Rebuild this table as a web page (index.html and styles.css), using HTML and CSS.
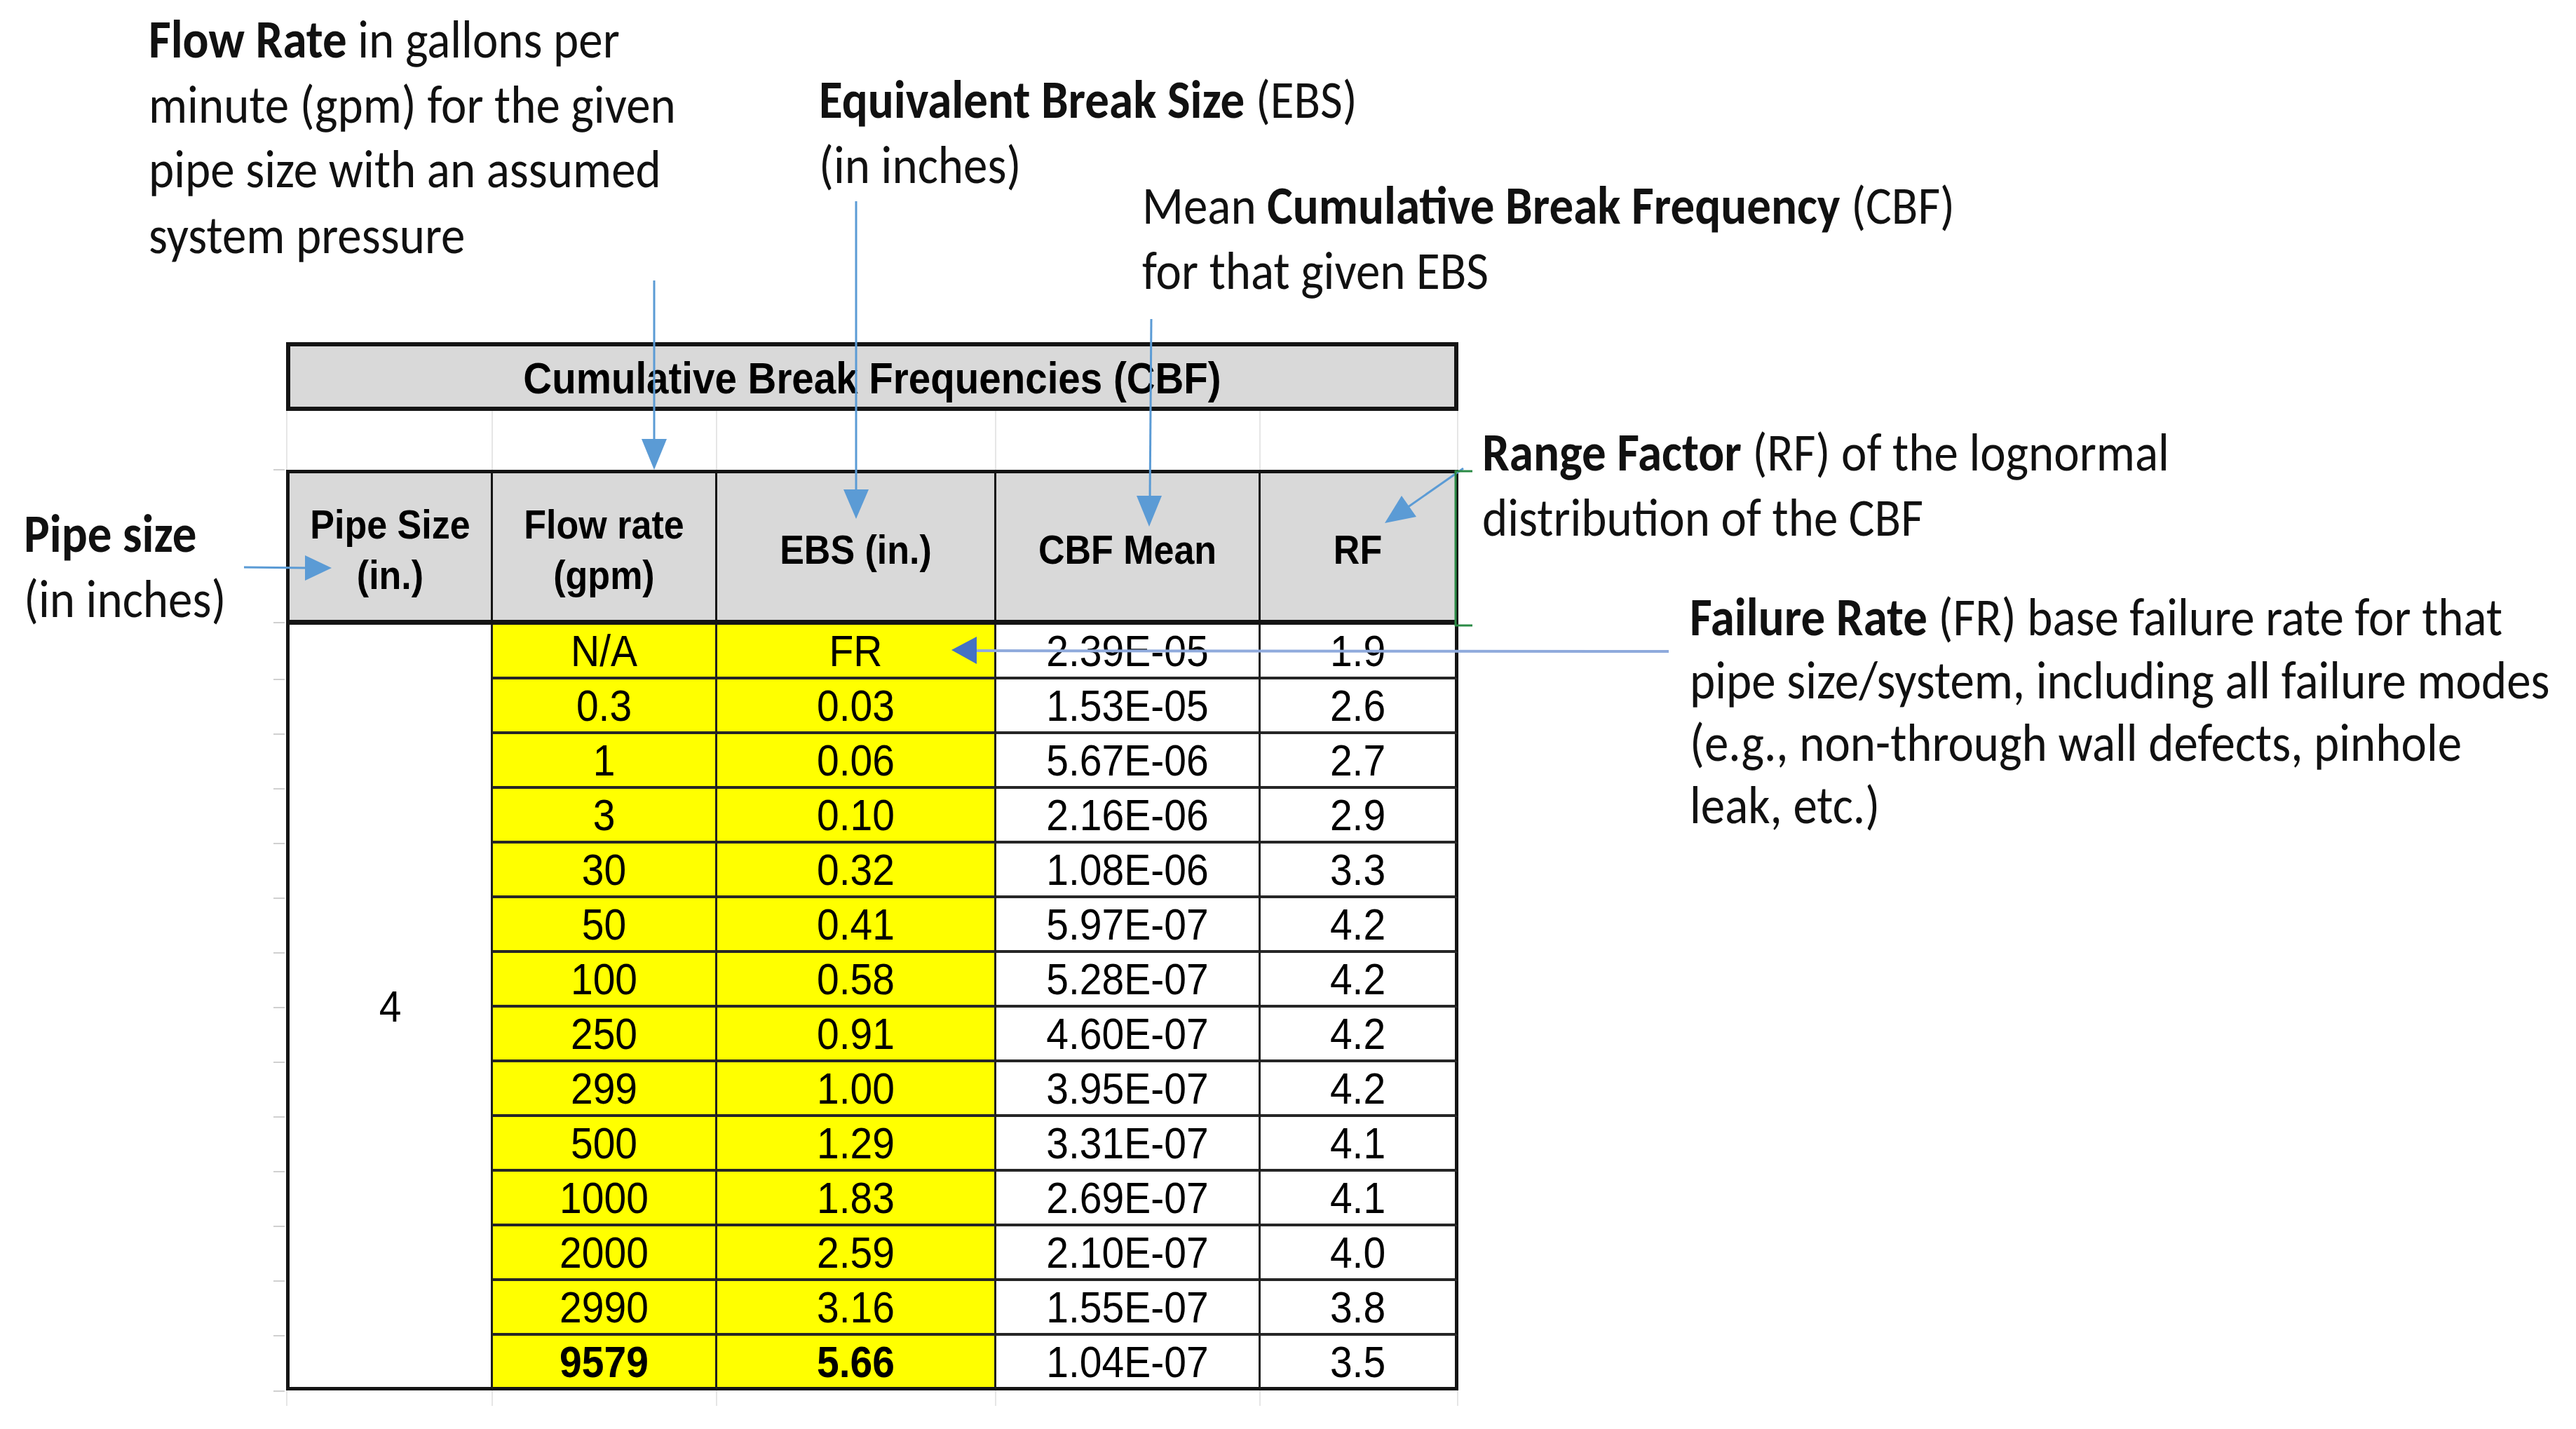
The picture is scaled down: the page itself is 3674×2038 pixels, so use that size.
FILE: index.html
```html
<!DOCTYPE html>
<html lang="en">
<head>
<meta charset="utf-8">
<title>Cumulative Break Frequencies (CBF)</title>
<link rel="stylesheet" href="styles.css">
</head>
<body>
<div class="canvas">
  <div class="title"><span>Cumulative Break Frequencies (CBF)</span></div>
  <div class="gridrow spacer"><span></span><span></span><span></span><span></span><span></span></div>
  <div class="cbf">
    <div class="h"><span>Pipe Size<br>(in.)</span></div>
    <div class="h"><span>Flow rate<br>(gpm)</span></div>
    <div class="h"><span>EBS (in.)</span></div>
    <div class="h"><span>CBF Mean</span></div>
    <div class="h h-last"><span>RF</span></div>

    <div class="c pipe"><span>4</span></div>
    <div class="c y"><span>N/A</span></div><div class="c y"><span>FR</span></div><div class="c"><span>2.39E-05</span></div><div class="c rf"><span>1.9</span></div>
    <div class="c y"><span>0.3</span></div><div class="c y"><span>0.03</span></div><div class="c"><span>1.53E-05</span></div><div class="c rf"><span>2.6</span></div>
    <div class="c y"><span>1</span></div><div class="c y"><span>0.06</span></div><div class="c"><span>5.67E-06</span></div><div class="c rf"><span>2.7</span></div>
    <div class="c y"><span>3</span></div><div class="c y"><span>0.10</span></div><div class="c"><span>2.16E-06</span></div><div class="c rf"><span>2.9</span></div>
    <div class="c y"><span>30</span></div><div class="c y"><span>0.32</span></div><div class="c"><span>1.08E-06</span></div><div class="c rf"><span>3.3</span></div>
    <div class="c y"><span>50</span></div><div class="c y"><span>0.41</span></div><div class="c"><span>5.97E-07</span></div><div class="c rf"><span>4.2</span></div>
    <div class="c y"><span>100</span></div><div class="c y"><span>0.58</span></div><div class="c"><span>5.28E-07</span></div><div class="c rf"><span>4.2</span></div>
    <div class="c y"><span>250</span></div><div class="c y"><span>0.91</span></div><div class="c"><span>4.60E-07</span></div><div class="c rf"><span>4.2</span></div>
    <div class="c y"><span>299</span></div><div class="c y"><span>1.00</span></div><div class="c"><span>3.95E-07</span></div><div class="c rf"><span>4.2</span></div>
    <div class="c y"><span>500</span></div><div class="c y"><span>1.29</span></div><div class="c"><span>3.31E-07</span></div><div class="c rf"><span>4.1</span></div>
    <div class="c y"><span>1000</span></div><div class="c y"><span>1.83</span></div><div class="c"><span>2.69E-07</span></div><div class="c rf"><span>4.1</span></div>
    <div class="c y"><span>2000</span></div><div class="c y"><span>2.59</span></div><div class="c"><span>2.10E-07</span></div><div class="c rf"><span>4.0</span></div>
    <div class="c y"><span>2990</span></div><div class="c y"><span>3.16</span></div><div class="c"><span>1.55E-07</span></div><div class="c rf"><span>3.8</span></div>
    <div class="c y last b"><span>9579</span></div><div class="c y last b"><span>5.66</span></div><div class="c last"><span>1.04E-07</span></div><div class="c rf last"><span>3.5</span></div>
  </div>
  <div class="gridrow below"><span></span><span></span><span></span><span></span><span></span></div>

  <p class="note note-flow"><b>Flow Rate</b> in gallons per<br>minute (gpm) for the given<br>pipe size with an assumed<br>system pressure</p>
  <p class="note note-ebs"><b>Equivalent Break Size</b> (EBS)<br>(in inches)</p>
  <p class="note note-cbf">Mean <b>Cumulative Break Frequency</b> (CBF)<br>for that given EBS</p>
  <p class="note note-rf"><b>Range Factor</b> (RF) of the lognormal<br>distribution of the CBF</p>
  <p class="note note-pipe"><b>Pipe size</b><br>(in inches)</p>
  <p class="note note-fr"><b>Failure Rate</b> (FR) base failure rate for that<br>pipe size/system, including all failure modes<br>(e.g., non-through wall defects, pinhole<br>leak, etc.)</p>

  <svg class="overlay" width="3674" height="2038" viewBox="0 0 3674 2038" aria-hidden="true">
    <g stroke="#d0d0d0" stroke-width="2">
      <line x1="390" y1="969" x2="406" y2="969"/><line x1="390" y1="1047" x2="406" y2="1047"/>
      <line x1="390" y1="1125" x2="406" y2="1125"/><line x1="390" y1="1203" x2="406" y2="1203"/>
      <line x1="390" y1="1281" x2="406" y2="1281"/><line x1="390" y1="1359" x2="406" y2="1359"/>
      <line x1="390" y1="1437" x2="406" y2="1437"/><line x1="390" y1="1515" x2="406" y2="1515"/>
      <line x1="390" y1="1593" x2="406" y2="1593"/><line x1="390" y1="1671" x2="406" y2="1671"/>
      <line x1="390" y1="1749" x2="406" y2="1749"/><line x1="390" y1="1827" x2="406" y2="1827"/>
      <line x1="390" y1="1905" x2="406" y2="1905"/><line x1="390" y1="1984" x2="406" y2="1984"/>
      <line x1="390" y1="670" x2="406" y2="670"/><line x1="390" y1="888" x2="406" y2="888"/>
    </g>
    <g stroke="#5b9bd5" stroke-width="3" fill="#5b9bd5">
      <line x1="933" y1="400" x2="933" y2="632"/>
      <polygon points="933,670 915,626 951,626" stroke="none"/>
      <line x1="1221" y1="287" x2="1221" y2="702"/>
      <polygon points="1221,740 1203,698 1239,698" stroke="none"/>
      <line x1="1642" y1="455" x2="1640" y2="712"/>
      <polygon points="1639,751 1621,707 1657,707" stroke="none"/>
      <line x1="2087" y1="668" x2="2004" y2="726"/>
      <polygon points="1975,746 1999,707 2020,737" stroke="none"/>
      <line x1="348" y1="809" x2="440" y2="810"/>
      <polygon points="473,810 435,792 435,828" stroke="none"/>
    </g>
    <line x1="2380" y1="929" x2="1390" y2="928" stroke="#8faadc" stroke-width="4"/>
    <polygon points="1357,927 1393,908 1393,947" fill="#4472c4"/>
    <g stroke="#2a8a45" stroke-width="3">
      <line x1="2076" y1="671" x2="2076" y2="893"/>
      <line x1="2075" y1="672" x2="2100" y2="672"/>
      <line x1="2075" y1="892" x2="2100" y2="892"/>
    </g>
  </svg>
</div>
</body>
</html>
```

FILE: styles.css
```css
html, body {
  margin: 0;
  padding: 0;
  background: #ffffff;
}

.canvas {
  position: relative;
  width: 3674px;
  height: 2038px;
  box-sizing: border-box;
  padding: 488px 0 0 408px;
  overflow: hidden;
  font-family: "Liberation Sans", Arial, sans-serif;
  color: #000;
}

.title {
  box-sizing: border-box;
  width: 1672px;
  height: 98px;
  border: 6px solid #141414;
  background: #d9d9d9;
  display: flex;
  align-items: center;
  justify-content: center;
  font-weight: bold;
  font-size: 56.5px;
  padding-top: 4px;
}

.title span,
.h span,
.c span {
  display: inline-block;
  transform: scaleY(1.11);
}

.gridrow {
  display: grid;
  grid-template-columns: 295px 320px 398px 377px 282px;
  width: 1672px;
}

.gridrow span {
  border-right: 2px solid #e6e6e6;
}

.gridrow span:first-child {
  border-left: 2px solid #e6e6e6;
}

.spacer {
  height: 84px;
}

.below {
  height: 22px;
}

.cbf {
  display: grid;
  grid-template-columns: 295px 320px 398px 377px 282px;
  grid-template-rows: 221px repeat(14, 78px);
  width: 1672px;
}

.h {
  box-sizing: border-box;
  background: #d9d9d9;
  border-top: 5px solid #141414;
  border-bottom: 7px solid #141414;
  border-right: 3px solid #141414;
  display: flex;
  align-items: center;
  justify-content: center;
  text-align: center;
  font-weight: bold;
  font-size: 52px;
  line-height: 65px;
  padding-top: 10px;
}

.h:first-child {
  border-left: 5px solid #141414;
}

.h-last {
  border-right: 5px solid #141414;
}

.c {
  box-sizing: border-box;
  border-right: 3px solid #1e1e1e;
  border-bottom: 4px solid #262626;
  display: flex;
  align-items: center;
  justify-content: center;
  font-size: 57px;
  background: #ffffff;
}

.y {
  background: #ffff00;
}

.pipe {
  grid-row: span 14;
  border-left: 5px solid #141414;
  border-bottom: 5px solid #141414;
}

.rf {
  border-right: 5px solid #141414;
}

.last {
  border-bottom: 5px solid #141414;
}

.b {
  font-weight: bold;
}

.note {
  position: absolute;
  margin: 0;
  white-space: nowrap;
  font-family: "Carlito", "Calibri", "Open Sans", sans-serif;
  font-size: 69px;
  line-height: 84.5px;
  color: #111;
  transform: scaleY(1.1);
  transform-origin: 0 0;
}

.note b {
  font-weight: bold;
}

.note-flow { left: 212px; top: 10px; }
.note-ebs { left: 1168px; top: 96px; }
.note-cbf { left: 1629px; top: 247px; }
.note-rf { left: 2114px; top: 599px; }
.note-pipe { left: 34px; top: 715px; }
.note-fr { left: 2410px; top: 836px; line-height: 81px; }

.overlay {
  position: absolute;
  left: 0;
  top: 0;
  pointer-events: none;
}
```
